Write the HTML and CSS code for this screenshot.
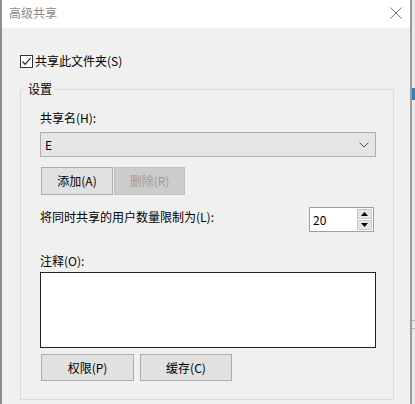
FILE: index.html
```html
<!DOCTYPE html>
<html lang="zh">
<head>
<meta charset="utf-8">
<link rel="stylesheet" href="styles.css">
</head>
<body>
<div class="screen">
  <div class="dialog">
    <div class="titlebar">
      <span class="title">高级共享</span>
      <svg class="close" width="12" height="12" viewBox="0 0 12 12"><path d="M0.5 0.5L11.5 11.5M11.5 0.5L0.5 11.5" stroke="#777" stroke-width="1" fill="none"/></svg>
    </div>
    <div class="content">
      <label class="check-row">
        <span class="checkbox"><svg width="11" height="11" viewBox="0 0 11 11"><path d="M1.5 5.5L4.2 8.3L9.5 2.2" stroke="#222" stroke-width="1.2" fill="none"/></svg></span>
        <span>共享此文件夹(S)</span>
      </label>
      <fieldset class="group">
        <legend>设置</legend>
        <div class="label">共享名(H):</div>
        <div class="select">
          <span>E</span>
          <svg width="10" height="6" viewBox="0 0 10 6"><path d="M0.5 0.5L5 5L9.5 0.5" stroke="#555" stroke-width="1" fill="none"/></svg>
        </div>
        <div class="btn-row small">
          <button class="btn w72">添加(A)</button>
          <button class="btn w71 disabled">删除(R)</button>
        </div>
        <div class="limit-row">
          <span class="limit-label">将同时共享的用户数量限制为(L):</span>
          <div class="spinner">
            <span class="spin-value">20</span>
            <div class="spin-btns">
              <div class="spin-btn"><svg width="7" height="4" viewBox="0 0 7 4"><path d="M0 4L3.5 0L7 4Z" fill="#000"/></svg></div>
              <div class="spin-btn"><svg width="7" height="4" viewBox="0 0 7 4"><path d="M0 0L3.5 4L7 0Z" fill="#000"/></svg></div>
            </div>
          </div>
        </div>
        <div class="label comment-label">注释(O):</div>
        <div class="textarea"></div>
        <div class="btn-row bottom">
          <button class="btn w93">权限(P)</button>
          <button class="btn w92">缓存(C)</button>
        </div>
      </fieldset>
    </div>
  </div>
  <div class="edge">
    <div class="edge-mark"></div>
    <div class="edge-blue"></div>
    <div class="edge-line l1"></div>
    <div class="edge-line l2"></div>
  </div>
</div>
</body>
</html>
```
FILE: styles.css
```css
* { box-sizing: border-box; }
html, body {
  margin: 0;
  padding: 0;
  width: 415px;
  height: 404px;
  overflow: hidden;
  background: #f0f0f0;
  font-family: "Noto Sans CJK SC", "Microsoft YaHei", sans-serif;
  font-size: 12px;
  line-height: 16px;
  color: #000;
}
.screen {
  display: flex;
  width: 415px;
  height: 404px;
}
.dialog {
  width: 412px;
  height: 404px;
  border-left: 2px solid #8d8d8d;
  border-right: 2px solid #9a9a9a;
  background: #f0f0f0;
  display: flex;
  flex-direction: column;
}
.titlebar {
  height: 28px;
  background: #fff;
  display: flex;
  align-items: center;
  justify-content: space-between;
  padding: 0 8px 2px 7px;
}
.title {
  color: #8a8a8a;
  font-size: 12px;
}
.close { margin-top: 0; }
.content {
  padding: 25px 16px 0 18px;
}
.check-row {
  display: flex;
  align-items: center;
  height: 16px;
  gap: 2px;
}
.checkbox {
  width: 13px;
  height: 13px;
  border: 1px solid #333;
  background: #fff;
  display: flex;
  align-items: center;
  justify-content: center;
}
.group {
  margin: 12px 0 0 0;
  border: 1px solid #dcdcdc;
  padding: 13px 15px 18px 19px;
  width: 374px;
  min-width: 0;
}
.group legend {
  padding: 0 2px;
  margin-left: -14px;
  font-size: 12px;
  line-height: 16px;
}
.label { height: 16px; }
.select {
  margin-top: 6px;
  width: 336px;
  height: 25px;
  background: #e5e5e5;
  border: 1px solid #adadad;
  display: flex;
  align-items: center;
  justify-content: space-between;
  padding: 0 6px 0 4px;
}
.btn-row {
  display: flex;
  padding-left: 1px;
}
.btn-row.small { margin-top: 10px; gap: 1px; }
.btn-row.bottom { margin-top: 6px; gap: 6px; }
.btn {
  font: inherit;
  color: #000;
  background: #e1e1e1;
  border: 1px solid #adadad;
  padding: 0;
  height: 28px;
}
.btn-row.bottom .btn { height: 27px; }
.btn.disabled {
  background: #cccccc;
  border-color: #bfbfbf;
  color: #9d9d9d;
}
.w72 { width: 72px; }
.w71 { width: 71px; }
.w93 { width: 93px; }
.w92 { width: 92px; }
.limit-row {
  margin-top: 12px;
  display: flex;
  justify-content: space-between;
  align-items: flex-start;
  width: 336px;
}
.limit-label { margin-top: 2px; }
.spinner {
  margin-right: 2px;
  width: 65px;
  height: 25px;
  background: #fff;
  border: 1px solid #a0a0a0;
  display: flex;
  align-items: center;
  justify-content: space-between;
}
.spin-value { padding-left: 3px; }
.spin-btns {
  width: 17px;
  height: 23px;
  display: flex;
  flex-direction: column;
  gap: 1px;
  padding: 1px;
}
.spin-btn {
  flex: 1;
  background: #e5e5e5;
  border: 1px solid #c8c8c8;
  display: flex;
  align-items: center;
  justify-content: center;
}
.comment-label { margin-top: 21px; }
.textarea {
  margin-top: 3px;
  width: 336px;
  height: 76px;
  background: #fff;
  border: 1px solid #222;
}
.edge {
  width: 3px;
  height: 404px;
  background: #e9e9e9;
  display: flex;
  flex-direction: column;
}
.edge-mark { height: 76px; }
.edge-blue {
  margin-top: 12px;
  height: 12px;
  background: #3c7fb8;
}
.edge-line {
  height: 1px;
  background: #b5b5b5;
}
.edge-line.l1 { margin-top: 220px; }
.edge-line.l2 { margin-top: 7px; }
```
